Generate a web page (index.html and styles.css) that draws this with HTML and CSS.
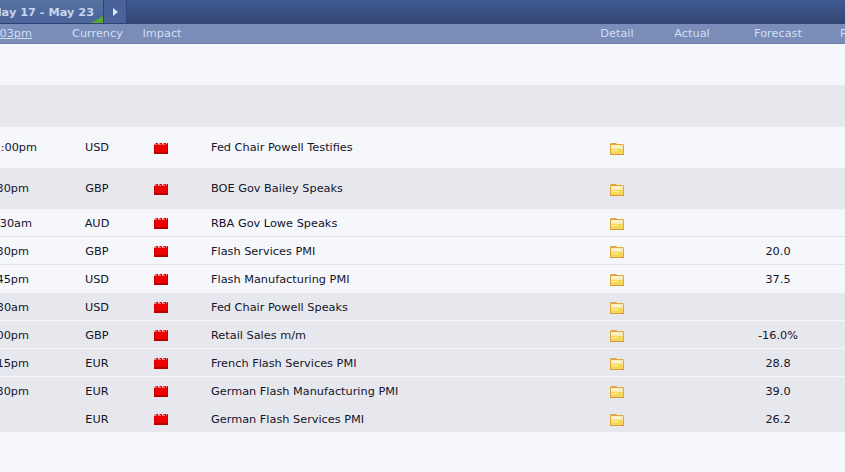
FILE: index.html
```html
<!DOCTYPE html>
<html lang="en">
<head>
<meta charset="utf-8">
<title>Calendar</title>
<link rel="stylesheet" href="styles.css">
</head>
<body>
<svg class="defs" width="0" height="0" aria-hidden="true">
  <symbol id="impact" viewBox="0 0 14 12">
    <path d="M0 12V3L2 1H4V3L6 1H8V3L10 1H12V3L13 1H14V12z" fill="#ec0000"/>
    <path d="M0 10h14v2H0z" fill="#b40000"/>
    <path d="M0 3h1v9H0zM13 2h1v10h-1z" fill="#c40000"/>
    <path d="M1 2h2v1H1zM5 2h2v1H5zM9 2h2v1H9z" fill="#f47070"/>
  </symbol>
  <symbol id="folder" viewBox="0 0 14 12">
    <path d="M0 1 1 0h5l1 1h6l1 1v10H0z" fill="#e2a63c"/>
    <path d="M1 2h12v9H1z" fill="#f8ecb4"/>
    <path d="M2 3h8v1H2z" fill="#fffbe0"/>
    <path d="M1 6h12v5H1z" fill="#f8d858"/>
    <path d="M2 7h6v1H2z" fill="#fff0a0"/>
    <path d="M0 11h14v1H0z" fill="#d8983a"/>
  </symbol>
</svg>
<div class="page">
  <div class="nav">
    <div class="range"><span class="range-text">May 17 - May 23</span><span class="flag"></span></div>
    <div class="next"><span class="arrow"></span></div>
  </div>
  <div class="row head">
    <div class="c-time"><u>1:03pm</u></div>
    <div class="c-cur">Currency</div>
    <div class="c-imp">Impact</div>
    <div class="c-title"></div>
    <div class="c-det">Detail</div>
    <div class="c-num">Actual</div>
    <div class="c-fc">Forecast</div>
    <div class="c-prev">Previous</div>
  </div>
  <div class="row tall"></div>
  <div class="row taller alt"></div>
  <div class="row tall">
    <div class="c-time"><span class="wide">1:00pm</span></div><div class="c-cur">USD</div>
    <div class="c-imp"><svg class="ic"><use href="#impact"/></svg></div>
    <div class="c-title">Fed Chair Powell Testifies</div>
    <div class="c-det"><svg class="ic"><use href="#folder"/></svg></div>
  </div>
  <div class="row tall alt">
    <div class="c-time"><span>4:30pm</span></div><div class="c-cur">GBP</div>
    <div class="c-imp"><svg class="ic"><use href="#impact"/></svg></div>
    <div class="c-title">BOE Gov Bailey Speaks</div>
    <div class="c-det"><svg class="ic"><use href="#folder"/></svg></div>
  </div>
  <div class="row line">
    <div class="c-time"><span class="mid">2:30am</span></div><div class="c-cur">AUD</div>
    <div class="c-imp"><svg class="ic"><use href="#impact"/></svg></div>
    <div class="c-title">RBA Gov Lowe Speaks</div>
    <div class="c-det"><svg class="ic"><use href="#folder"/></svg></div>
  </div>
  <div class="row line">
    <div class="c-time"><span>4:30pm</span></div><div class="c-cur">GBP</div>
    <div class="c-imp"><svg class="ic"><use href="#impact"/></svg></div>
    <div class="c-title">Flash Services PMI</div>
    <div class="c-det"><svg class="ic"><use href="#folder"/></svg></div>
    <div class="c-num"></div><div class="c-fc">20.0</div>
  </div>
  <div class="row">
    <div class="c-time"><span>9:45pm</span></div><div class="c-cur">USD</div>
    <div class="c-imp"><svg class="ic"><use href="#impact"/></svg></div>
    <div class="c-title">Flash Manufacturing PMI</div>
    <div class="c-det"><svg class="ic"><use href="#folder"/></svg></div>
    <div class="c-num"></div><div class="c-fc">37.5</div>
  </div>
  <div class="row alt line">
    <div class="c-time"><span>8:30am</span></div><div class="c-cur">USD</div>
    <div class="c-imp"><svg class="ic"><use href="#impact"/></svg></div>
    <div class="c-title">Fed Chair Powell Speaks</div>
    <div class="c-det"><svg class="ic"><use href="#folder"/></svg></div>
  </div>
  <div class="row alt line">
    <div class="c-time"><span>7:00pm</span></div><div class="c-cur">GBP</div>
    <div class="c-imp"><svg class="ic"><use href="#impact"/></svg></div>
    <div class="c-title">Retail Sales m/m</div>
    <div class="c-det"><svg class="ic"><use href="#folder"/></svg></div>
    <div class="c-num"></div><div class="c-fc">-16.0%</div>
  </div>
  <div class="row alt line">
    <div class="c-time"><span>3:15pm</span></div><div class="c-cur">EUR</div>
    <div class="c-imp"><svg class="ic"><use href="#impact"/></svg></div>
    <div class="c-title">French Flash Services PMI</div>
    <div class="c-det"><svg class="ic"><use href="#folder"/></svg></div>
    <div class="c-num"></div><div class="c-fc">28.8</div>
  </div>
  <div class="row alt">
    <div class="c-time"><span>3:30pm</span></div><div class="c-cur">EUR</div>
    <div class="c-imp"><svg class="ic"><use href="#impact"/></svg></div>
    <div class="c-title">German Flash Manufacturing PMI</div>
    <div class="c-det"><svg class="ic"><use href="#folder"/></svg></div>
    <div class="c-num"></div><div class="c-fc">39.0</div>
  </div>
  <div class="row alt last">
    <div class="c-time"></div><div class="c-cur">EUR</div>
    <div class="c-imp"><svg class="ic"><use href="#impact"/></svg></div>
    <div class="c-title">German Flash Services PMI</div>
    <div class="c-det"><svg class="ic"><use href="#folder"/></svg></div>
    <div class="c-num"></div><div class="c-fc">26.2</div>
  </div>
</div>
</body>
</html>
```

FILE: styles.css
```css
html, body {
  margin: 0;
  height: 100%;
  overflow: hidden;
  background: #f5f7fb;
}
.defs { display: block; height: 0; }
.page {
  width: 916px;
  font: 11.3px "DejaVu Sans", Verdana, sans-serif;
  color: #14142b;
}
.nav {
  display: flex;
  height: 24px;
  box-sizing: border-box;
  border-bottom: 1px solid #2f4270;
  background: linear-gradient(#3e5a93, #334872);
}
.range {
  position: relative;
  width: 104px;
  display: flex;
  justify-content: flex-end;
  align-items: center;
  overflow: hidden;
  background: linear-gradient(#57719f, #4a649b);
  border-right: 1px solid #2f4474;
  box-sizing: border-box;
  padding-right: 9px;
  padding-top: 1px;
  font-weight: bold;
  color: #c4d6ee;
  white-space: nowrap;
}
.range-text { flex: none; }
.flag {
  position: absolute;
  right: 0;
  bottom: 0;
  width: 0;
  height: 0;
  border-left: 12px solid transparent;
  border-bottom: 7px solid #56ab2f;
}
.next {
  width: 23px;
  display: flex;
  justify-content: center;
  align-items: center;
  background: #4a629a;
  border-right: 1px solid #33487a;
  box-sizing: border-box;
}
.arrow {
  width: 0;
  height: 0;
  border-left: 5px solid #dce6f5;
  border-top: 4px solid transparent;
  border-bottom: 4px solid transparent;
}
.row {
  display: grid;
  grid-template-columns: 72px 50px 80px 390px 50px 100px 72px 102px;
  align-items: center;
  height: 28px;
}
.alt { background: #e7e8ed; }
.tall { height: 41px; }
.taller { height: 42px; }
.last { height: 27px; padding-top: 1px; box-sizing: border-box; }
.line { border-bottom: 1px solid #e2e4ea; padding-top: 1px; box-sizing: border-box; }
.alt.line { border-bottom-color: #f5f7fb; }
.head {
  height: 20px;
  box-sizing: border-box;
  background: #7a8cb8;
  border-bottom: 1px solid #6d7ea8;
  color: #d0dff3;
}
.c-time {
  width: 37px;
  display: flex;
  justify-content: flex-end;
  overflow: hidden;
  white-space: nowrap;
}
.c-time span { flex: none; padding-right: 8px; }
.c-time span.wide { padding-right: 0; }
.c-time span.mid { padding-right: 5px; }
.head .c-time u { flex: none; margin-right: 5px; }
.c-cur, .c-imp, .c-det, .c-num, .c-fc { text-align: center; }
.c-prev { padding-left: 26px; white-space: nowrap; }
.c-title { padding-left: 9px; white-space: nowrap; }
.ic { display: block; width: 14px; height: 12px; margin: 0 auto; }
.c-imp .ic { position: relative; left: -1px; }
.c-det .ic { position: relative; top: 1px; }
```
